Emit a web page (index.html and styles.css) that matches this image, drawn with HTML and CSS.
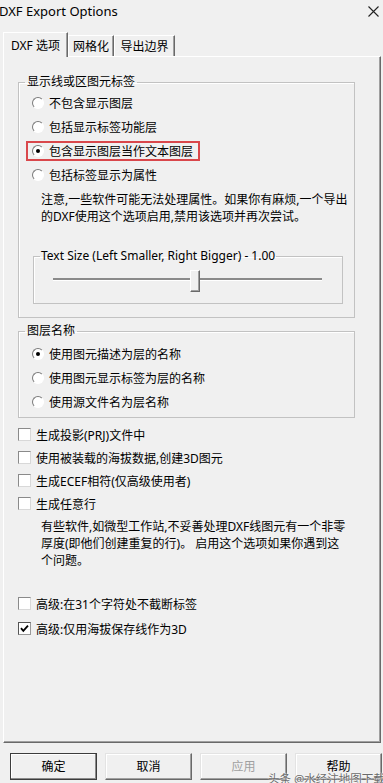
FILE: index.html
```html
<!DOCTYPE html>
<html lang="zh">
<head>
<meta charset="utf-8">
<title>DXF Export Options</title>
<link rel="stylesheet" href="styles.css">
</head>
<body>
<div class="titlebar">
  <span class="title">DXF Export Options</span>
  <svg class="close" width="11" height="11" viewBox="0 0 11 11"><path d="M0.5 0.5 L10.5 10.5 M10.5 0.5 L0.5 10.5" stroke="#222" stroke-width="1.1" fill="none"/></svg>
</div>
<div class="tabs">
  <div class="tab active t1">DXF 选项</div>
  <div class="tab t2">网格化</div>
  <div class="tab t3">导出边界</div>
</div>
<div class="panel">
  <fieldset class="group g1">
    <legend>显示线或区图元标签</legend>
    <div class="opt"><span class="radio"></span><span>不包含显示图层</span></div>
    <div class="opt"><span class="radio"></span><span>包括显示标签功能层</span></div>
    <div class="opt"><span class="hl"><span class="radio on"></span><span>包含显示图层当作文本图层</span></span></div>
    <div class="opt"><span class="radio"></span><span>包括标签显示为属性</span></div>
    <p class="note">注意,一些软件可能无法处理属性。如果你有麻烦,一个导出<br>的DXF使用这个选项启用,禁用该选项并再次尝试。</p>
    <fieldset class="group inner">
      <legend>Text Size (Left Smaller, Right Bigger) - 1.00</legend>
      <div class="slider"><div class="track"></div><div class="thumb"></div></div>
    </fieldset>
  </fieldset>
  <fieldset class="group g2">
    <legend>图层名称</legend>
    <div class="opt"><span class="radio on"></span><span>使用图元描述为层的名称</span></div>
    <div class="opt"><span class="radio"></span><span>使用图元显示标签为层的名称</span></div>
    <div class="opt"><span class="radio"></span><span>使用源文件名为层名称</span></div>
  </fieldset>
  <div class="checks">
    <div class="chk"><span class="box"></span><span>生成投影(PRJ)文件中</span></div>
    <div class="chk"><span class="box"></span><span>使用被装载的海拔数据,创建3D图元</span></div>
    <div class="chk"><span class="box"></span><span>生成ECEF相符(仅高级使用者)</span></div>
    <div class="chk"><span class="box"></span><span>生成任意行</span></div>
  </div>
  <p class="note note2">有些软件,如微型工作站,不妥善处理DXF线图元有一个非零<br>厚度(即他们创建重复的行)。 启用这个选项如果你遇到这<br>个问题。</p>
  <div class="checks checks2">
    <div class="chk"><span class="box"></span><span>高级:在31个字符处不截断标签</span></div>
    <div class="chk"><span class="box checked"><svg width="11" height="11" viewBox="0 0 11 11"><path d="M2 5.2 L4.3 7.8 L9 2.6" stroke="#000" stroke-width="1.8" fill="none"/></svg></span><span>高级:仅用海拔保存线作为3D</span></div>
  </div>
</div>
<div class="buttons">
  <button class="btn default">确定</button>
  <button class="btn">取消</button>
  <button class="btn disabled">应用</button>
  <button class="btn">帮助</button>
</div>
<div class="watermark">头条 @水经注地图下载器</div>
</body>
</html>
```
FILE: styles.css
```css
* { box-sizing: border-box; }
html, body { margin: 0; padding: 0; }
body {
  width: 383px;
  height: 783px;
  overflow: hidden;
  position: relative;
  background: #f0f0f0;
  font-family: "Noto Sans", "Noto Sans CJK SC", sans-serif;
  font-size: 12px;
  color: #000;
}
.titlebar {
  height: 22px;
  display: flex;
  align-items: center;
  justify-content: space-between;
  padding-right: 4px;
}
.title { font-size: 13px; margin-left: -1px; }
.close { display: block; }

.tabs {
  height: 34px;
  display: flex;
  align-items: flex-end;
  padding-left: 3px;
  position: relative;
  z-index: 2;
}
.tab {
  height: 21px;
  display: flex;
  align-items: center;
  justify-content: center;
  border-top: 1px solid #fff;
  border-left: 1px solid #fff;
  border-right: 1px solid #696969;
  box-shadow: inset -1px 0 0 #a0a0a0;
}
.tab.active {
  height: 25px;
  margin-bottom: -1px;
  background: #f0f0f0;
}
.t1 { width: 65px; }
.t2 { width: 46px; }
.t3 { width: 61px; }

.panel {
  margin-left: 3px;
  width: 378px;
  height: 687px;
  border-top: 1px solid #fff;
  border-left: 1px solid #fff;
  border-right: 1px solid #696969;
  border-bottom: 1px solid #696969;
  box-shadow: inset -1px -1px 0 #a0a0a0;
  padding: 17px 0 0 14px;
}

.group {
  margin: 0;
  padding: 0;
  min-width: 0;
  border: 1px solid #c2c2c2;
  box-shadow: inset 1px 1px 0 #fff;
}
.group legend {
  margin-left: 6px;
  padding: 0 2px;
  line-height: 16px;
}
.g1 { width: 337px; padding: 1px 0 13px 0; }
.g2 { width: 337px; margin-top: 5px; padding: 3px 0 3px 0; }

.opt {
  height: 24px;
  display: flex;
  align-items: center;
  padding-left: 13px;
  gap: 5px;
}
.radio {
  width: 12px;
  height: 12px;
  border-radius: 50%;
  background: #fff;
  border: 1px solid;
  border-color: #7a7a7a #fff #fff #7a7a7a;
  display: flex;
  align-items: center;
  justify-content: center;
  flex: none;
}
.radio.on::after {
  content: "";
  width: 4px;
  height: 4px;
  border-radius: 50%;
  background: #000;
}
.hl {
  display: flex;
  align-items: center;
  gap: 5px;
  width: 174px;
  height: 20px;
  margin-left: -6px;
  padding-left: 4px;
  border: 2px solid #d9474b;
}

.note {
  margin: 4px 0 0 22px;
  line-height: 17px;
}
.inner {
  width: 310px;
  margin: 23px 0 0 14px;
}
.inner legend { padding: 0 1px; }
.slider {
  position: relative;
  height: 39px;
  width: 269px;
  margin-left: 19px;
  padding-top: 14px;
}
.track {
  height: 2px;
  background: #8a8a8a;
  box-shadow: 0 1px 0 #fff;
}
.thumb {
  position: absolute;
  left: 137px;
  top: 6px;
  width: 10px;
  height: 22px;
  background: #f0f0f0;
  border-top: 1px solid #fff;
  border-left: 1px solid #fff;
  border-right: 1px solid #696969;
  border-bottom: 1px solid #696969;
  box-shadow: inset -1px -1px 0 #a0a0a0;
}

.checks { margin-top: 5px; }
.chk {
  height: 23px;
  display: flex;
  align-items: center;
  gap: 5px;
}
.box {
  width: 13px;
  height: 13px;
  background: #fff;
  border: 1px solid;
  border-color: #8a8a8a #d8d8d8 #d8d8d8 #8a8a8a;
  flex: none;
  display: flex;
  align-items: center;
  justify-content: center;
}
.box.checked { border-color: #555 #999 #999 #555; }
.box svg { display: block; }
.note2 { margin: 3px 0 0 23px; }
.checks2 { margin-top: 22px; }
.checks2 .chk { height: 25px; }

.buttons {
  display: flex;
  gap: 8px;
  margin: 10px 0 0 10px;
}
.btn {
  width: 87px;
  height: 27px;
  padding: 0 0 2px 0;
  background: #f0f0f0;
  font-family: "Noto Sans", "Noto Sans CJK SC", sans-serif;
  font-size: 12px;
  color: #000;
  border-top: 1px solid #e3e3e3;
  border-left: 1px solid #e3e3e3;
  border-right: 1px solid #696969;
  border-bottom: 1px solid #696969;
  box-shadow: inset -1px -1px 0 #a0a0a0, inset 1px 1px 0 #fff;
}
.btn.default {
  border: 1px solid #3c3c3c;
  box-shadow: inset -1px -1px 0 #8a8a8a, inset 1px 1px 0 #fff;
}
.btn.disabled { color: #a0a0a0; }

.watermark {
  position: absolute;
  left: 268px;
  top: 772px;
  font-size: 11.5px;
  line-height: 13px;
  white-space: nowrap;
  color: #6a6a6a;
  text-shadow: 0 0 2px #fff, 0 0 1px #fff;
}
```
